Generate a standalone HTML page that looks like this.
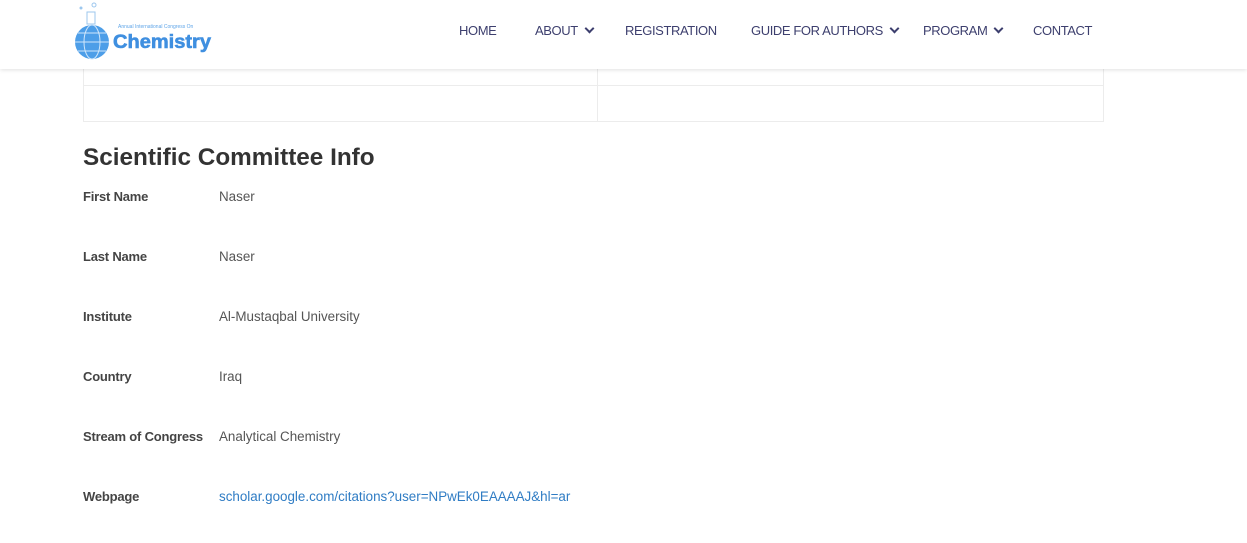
<!DOCTYPE html>
<html><head><style>
body{margin:0;width:1247px;height:543px;background:#fff;font-family:"Liberation Sans",sans-serif;overflow:hidden;position:relative}
.hdr{position:absolute;left:0;top:0;width:1247px;height:69px;background:#fff;box-shadow:0 1px 4px rgba(0,0,0,.12);z-index:2}
.nav{position:absolute;top:23px;font-size:13px;letter-spacing:-0.4px;color:#3d3f6e;white-space:nowrap}
.chev{display:inline-block;width:5px;height:5px;border-right:2px solid #3d3f6e;border-bottom:2px solid #3d3f6e;transform:rotate(45deg);margin-left:8px;position:relative;top:-3px}
.tbl{position:absolute;left:83px;top:50px;width:1019px;height:70px;border:1px solid #ececec}
.h{position:absolute;left:83px;top:144px;font-size:24.3px;font-weight:bold;color:#333}
.l{position:absolute;left:83px;font-size:13px;font-weight:bold;color:#444;letter-spacing:-0.2px}
.v{position:absolute;left:219px;font-size:13.4px;color:#555}
</style></head><body>
<div class="hdr">
<svg style="position:absolute;left:70px;top:0" width="150" height="64">
<circle cx="22" cy="42" r="17" fill="#4d9ee8"/>
<g stroke="#cfe6fb" stroke-width="1" fill="none"><ellipse cx="22" cy="42" rx="8" ry="17"/><line x1="5" y1="42" x2="39" y2="42"/><line x1="8" y1="33" x2="36" y2="33"/><line x1="8" y1="51" x2="36" y2="51"/></g>
<rect x="17" y="12" width="8" height="12" fill="none" stroke="#9cc7ee"/>
<circle cx="24" cy="5" r="2" fill="none" stroke="#9cc7ee"/>
<circle cx="11" cy="8" r="1.5" fill="#9cc7ee"/>
<text x="48" y="28" font-size="5" fill="#5fa5e8" font-family="Liberation Sans">Annual International Congress On</text>
<text x="43" y="48" font-size="19" font-weight="bold" fill="#3f8fe0" font-family="Liberation Sans" textLength="98" lengthAdjust="spacingAndGlyphs" stroke="#3f8fe0" stroke-width="0.6">Chemistry</text>
</svg>
<div class="nav" style="left:459px">HOME</div>
<div class="nav" style="left:535px">ABOUT<span class="chev"></span></div>
<div class="nav" style="left:625px">REGISTRATION</div>
<div class="nav" style="left:751px">GUIDE FOR AUTHORS<span class="chev"></span></div>
<div class="nav" style="left:923px">PROGRAM<span class="chev"></span></div>
<div class="nav" style="left:1033px">CONTACT</div>
</div>
<div class="tbl"><div style="position:absolute;left:0;right:0;top:34px;border-top:1px solid #ececec"></div><div style="position:absolute;left:513px;top:0;bottom:0;border-left:1px solid #ececec"></div></div>
<div class="h">Scientific Committee Info</div>
<div class="l" style="top:189px">First Name</div><div class="v" style="top:189px">Naser</div>
<div class="l" style="top:249px">Last Name</div><div class="v" style="top:249px">Naser</div>
<div class="l" style="top:309px">Institute</div><div class="v" style="top:309px">Al-Mustaqbal University</div>
<div class="l" style="top:369px">Country</div><div class="v" style="top:369px">Iraq</div>
<div class="l" style="top:429px">Stream of Congress</div><div class="v" style="top:429px">Analytical Chemistry</div>
<div class="l" style="top:489px">Webpage</div><div class="v" style="top:489px;color:#2f7cc4">scholar.google.com/citations?user=NPwEk0EAAAAJ&amp;hl=ar</div>
</body></html>
